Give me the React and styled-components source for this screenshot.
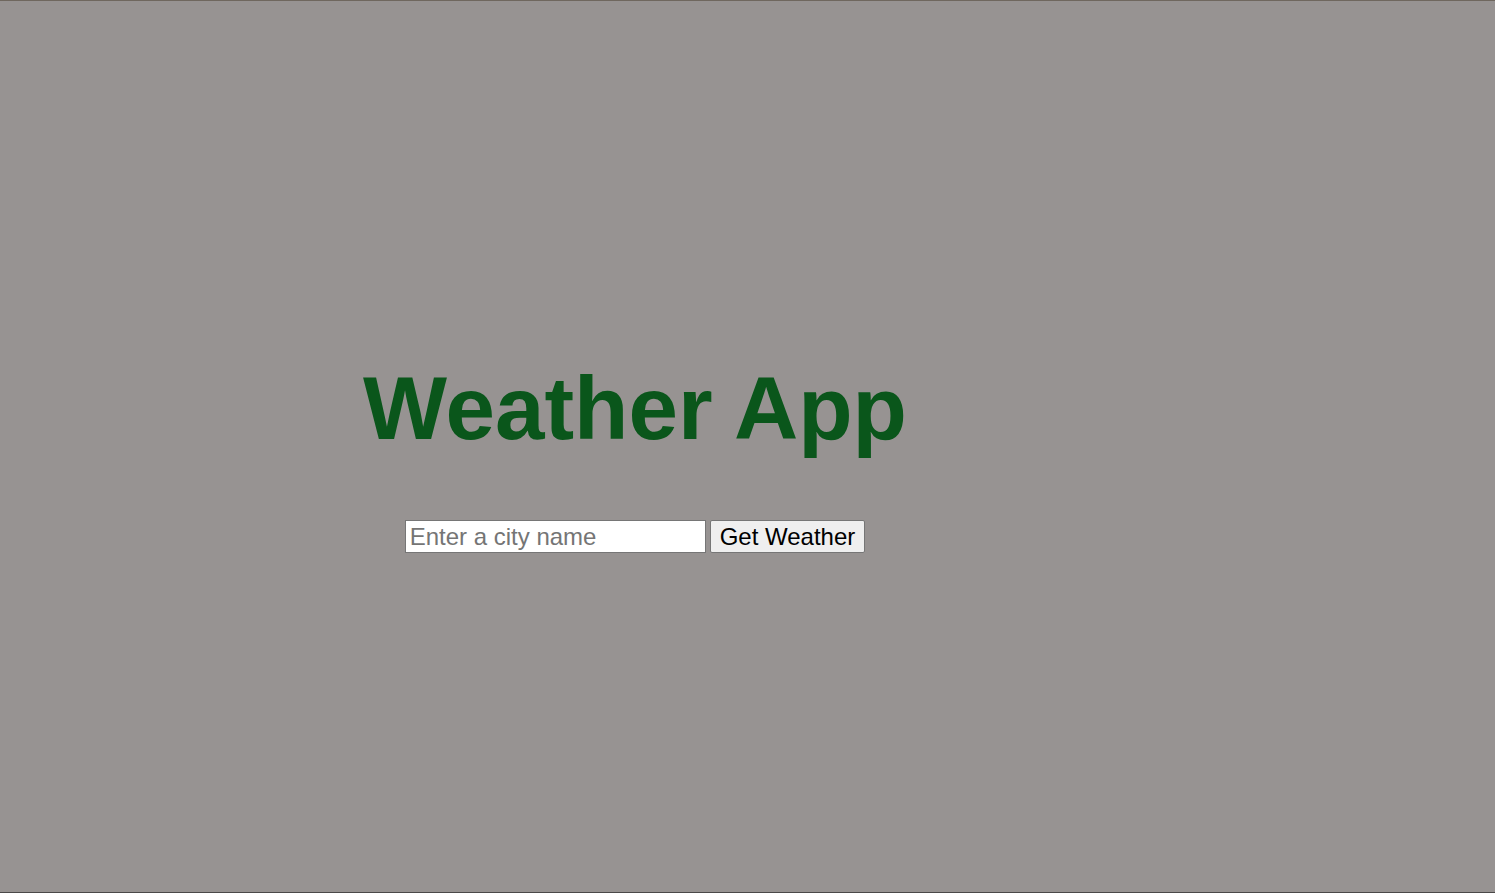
import React, { useState } from 'react'
import styled, { createGlobalStyle } from 'styled-components'

const GlobalStyle = createGlobalStyle`
  html, body {
    margin: 0;
    padding: 0;
    background: #979392;
  }
  body {
    font-family: 'Liberation Sans', Arial, sans-serif;
  }
`

const Page = styled.div`
  box-sizing: border-box;
  height: 100vh;
  border-top: 1px solid #6f675e;
  border-bottom: 1px solid #4a4848;
  background: #979392;
`

const Container = styled.main`
  width: 1270px;
  padding-top: 356px;
  display: flex;
  flex-direction: column;
  align-items: center;
`

const Title = styled.h1`
  margin: 0;
  font-size: 89px;
  font-weight: 700;
  color: #0a561b;
  line-height: normal;
`

const SearchForm = styled.form`
  margin-top: 60px;
  display: flex;
  gap: 4px;
  align-items: center;
`

const CityInput = styled.input`
  box-sizing: border-box;
  width: 301px;
  height: 33px;
  padding: 0 4px;
  font-family: 'Liberation Sans', Arial, sans-serif;
  font-size: 24px;
  color: #000;
  background: #fff;
  border: 1px solid #767676;
  border-radius: 0;
  outline: none;
  &::placeholder {
    color: #757575;
  }
`

const SubmitButton = styled.button`
  box-sizing: border-box;
  height: 33px;
  padding: 0 9px;
  font-family: 'Liberation Sans', Arial, sans-serif;
  font-size: 24px;
  color: #000;
  background: #efefef;
  border: 1px solid #767676;
  border-radius: 2px;
  cursor: pointer;
`

export default function App() {
  const [city, setCity] = useState('')

  const handleSubmit = e => {
    e.preventDefault()
  }

  return (
    <>
      <GlobalStyle />
      <Page>
        <Container>
          <Title>Weather App</Title>
          <SearchForm onSubmit={handleSubmit}>
            <CityInput
              type="text"
              placeholder="Enter a city name"
              value={city}
              onChange={e => setCity(e.target.value)}
            />
            <SubmitButton type="submit">Get Weather</SubmitButton>
          </SearchForm>
        </Container>
      </Page>
    </>
  )
}
